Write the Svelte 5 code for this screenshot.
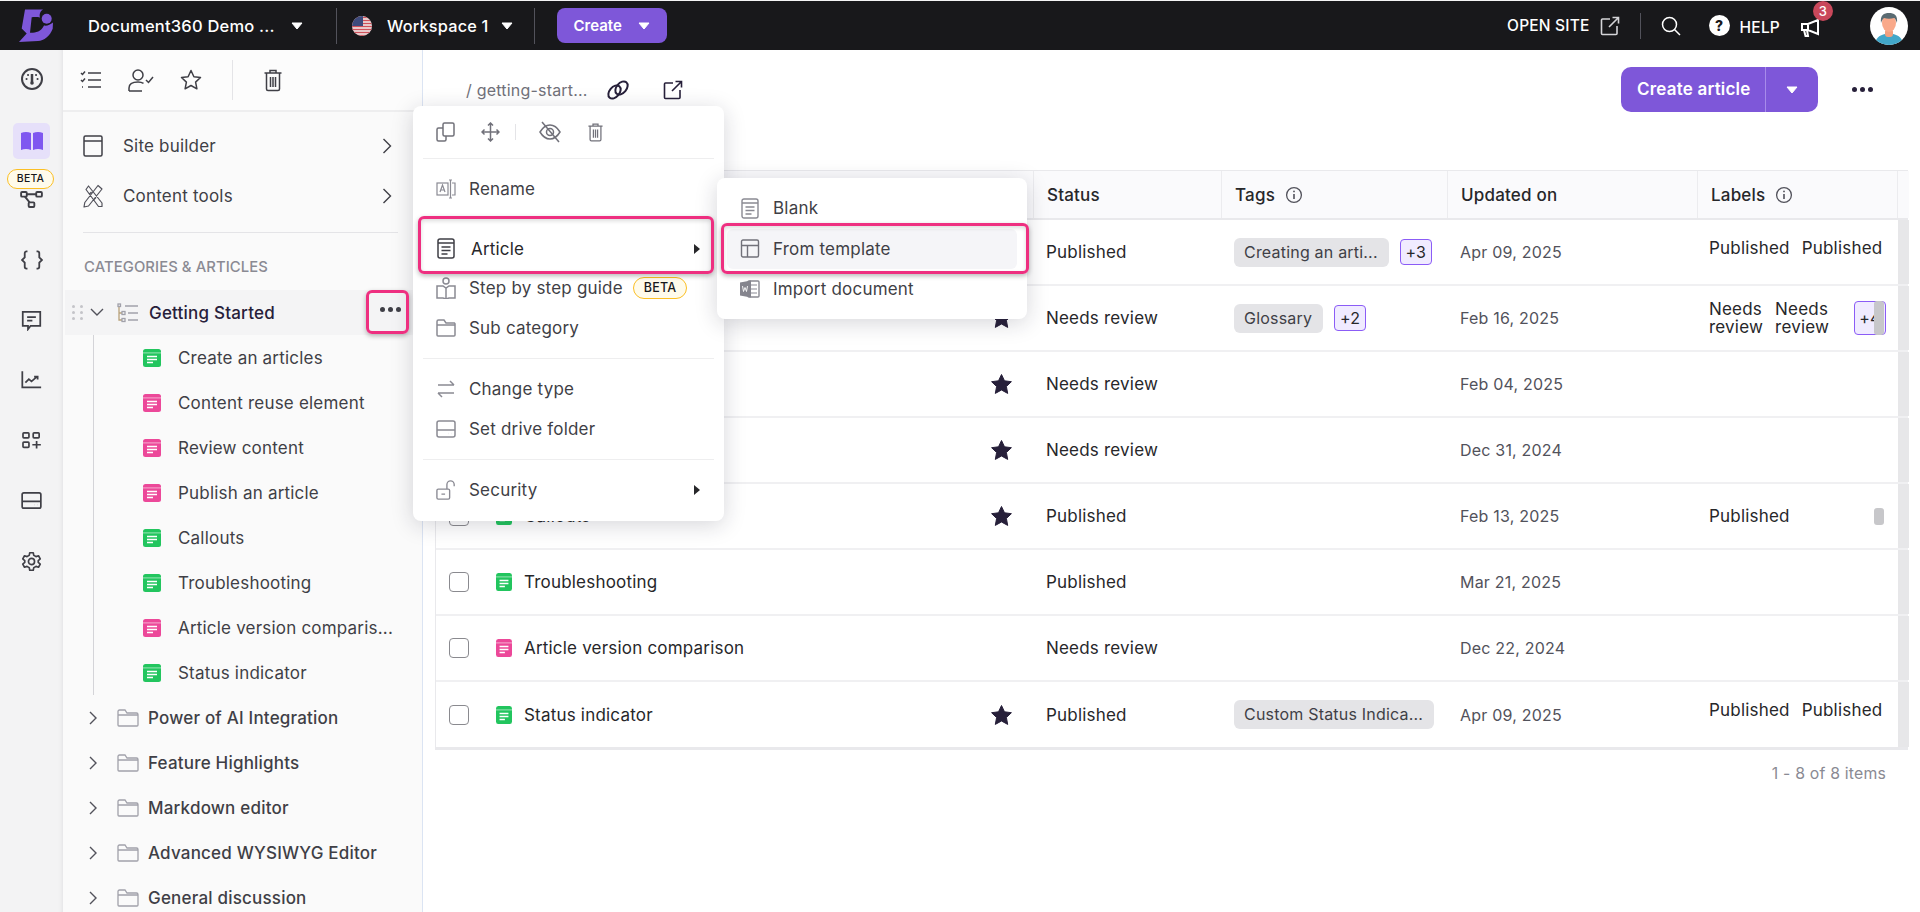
<script>
  const tree = [
    { name: 'Create an articles', color: '#22c55e' },
    { name: 'Content reuse element', color: '#ec4899' },
    { name: 'Review content', color: '#ec4899' },
    { name: 'Publish an article', color: '#ec4899' },
    { name: 'Callouts', color: '#22c55e' },
    { name: 'Troubleshooting', color: '#22c55e' },
    { name: 'Article version comparis...', color: '#ec4899' },
    { name: 'Status indicator', color: '#22c55e' }
  ];

  const folders = ['Power of AI Integration', 'Feature Highlights', 'Markdown editor', 'Advanced WYSIWYG Editor', 'General discussion'];

  const rows = [
    { name: 'Create an articles', color: '#22c55e', star: true, status: 'Published', tag: 'Creating an arti...', more: '+3', date: 'Apr 09, 2025', labels: ['Published', 'Published'] },
    { name: 'Content reuse element', color: '#ec4899', star: true, status: 'Needs review', tag: 'Glossary', more: '+2', date: 'Feb 16, 2025', labels: ['Needs review', 'Needs review'], extra: '+4' },
    { name: 'Review content', color: '#ec4899', star: true, status: 'Needs review', date: 'Feb 04, 2025', labels: [] },
    { name: 'Publish an article', color: '#ec4899', star: true, status: 'Needs review', date: 'Dec 31, 2024', labels: [] },
    { name: 'Callouts', color: '#22c55e', star: true, status: 'Published', date: 'Feb 13, 2025', labels: ['Published'], thumb: true },
    { name: 'Troubleshooting', color: '#22c55e', status: 'Published', date: 'Mar 21, 2025', labels: [] },
    { name: 'Article version comparison', color: '#ec4899', status: 'Needs review', date: 'Dec 22, 2024', labels: [] },
    { name: 'Status indicator', color: '#22c55e', star: true, status: 'Published', tag: 'Custom Status Indica...', date: 'Apr 09, 2025', labels: ['Published', 'Published'] }
  ];
</script>

{#snippet doc(color, w = 18, h = 18)}
  <svg width={w} height={h} viewBox="0 0 18 18" preserveAspectRatio="none">
    <rect x="0" y="0" width="18" height="18" rx="2.5" fill={color} />
    <rect x="0" y="3.4" width="18" height="1" fill="#fff" opacity=".55" />
    <path d="M4 7.5h10M4 10.5h10M4 13.5h6" stroke="#fff" stroke-width="1.3" />
  </svg>
{/snippet}

{#snippet caret(color = '#fff')}
  <svg class="caret" width="12" height="8" viewBox="0 0 12 8"><path d="M1 1h10L6 7z" fill={color} stroke={color} stroke-linejoin="round" /></svg>
{/snippet}

{#snippet chevron()}
  <svg width="10" height="18" viewBox="0 0 10 18" fill="none" stroke="#3f3f46" stroke-width="1.4"><path d="M1.5 2l7 7-7 7" /></svg>
{/snippet}

{#snippet info()}
  <svg width="18" height="18" viewBox="0 0 18 18" fill="none" stroke="#52525b" stroke-width="1.3"><circle cx="9" cy="9" r="7.4" /><path d="M9 8v5" stroke-width="1.6" /><circle cx="9" cy="5.4" r=".9" fill="#52525b" stroke="none" /></svg>
{/snippet}

{#snippet trash(color, w = 20, h = 24)}
  <svg width={w} height={h} viewBox="0 0 20 24" fill="none" stroke={color} stroke-width="1.5"><path d="M1.5 5h17M7 5V2.5h6V5M3.5 5v16a1.5 1.5 0 0 0 1.5 1.5h10a1.5 1.5 0 0 0 1.5-1.5V5M7.5 9v10M10 9v10M12.5 9v10" /></svg>
{/snippet}

{#snippet external(color)}
  <svg width="20" height="20" viewBox="0 0 20 20" fill="none" stroke={color} stroke-width="1.6"><path d="M10 3H2.5a1 1 0 0 0-1 1v13.5a1 1 0 0 0 1 1H16a1 1 0 0 0 1-1V10M9 11l9.5-9.5M12.5 1.5h6v6" /></svg>
{/snippet}

<div class="page">
  <header class="topbar">
    <svg class="logo" width="38" height="36" viewBox="0 0 38 36">
      <path d="M8 1.500H26C23 3 22 7 23 9.500C21 9 18 9 14.700 9.200L13 24.800C18 25 24 24 27 17.500C30 18 33 17 36 14.500L35.700 20.800C33 28 27 33 21 33L2 34L9.700 25.500L4.700 20.500Z" fill="#7e57d9" />
      <circle cx="29.700" cy="10.800" r="5" fill="#7e57d9" />
    </svg>
    <span class="brand">Document360 Demo ...</span>
    {@render caret()}
    <i class="tsep"></i>
    <svg class="flag" width="20" height="20" viewBox="0 0 20 20">
      <defs><clipPath id="flagclip"><circle cx="10" cy="10" r="10" /></clipPath></defs>
      <g clip-path="url(#flagclip)">
        <rect width="20" height="20" fill="#f1f1f1" />
        <path d="M0 1.500h20M0 4.500h20M0 7.500h20M0 10.500h20M0 13.500h20M0 16.500h20M0 19.500h20" stroke="#d0505a" stroke-width="1.500" />
        <rect width="11" height="10" fill="#3d4a7c" />
      </g>
    </svg>
    <span class="workspace">Workspace 1</span>
    {@render caret()}
    <i class="tsep second"></i>
    <button class="create">Create {@render caret()}</button>

    <div class="topright">
      <span class="opensite">OPEN SITE</span>
      {@render external('#d4d4d8')}
      <i class="tsep right"></i>
      <svg class="search" width="20" height="20" viewBox="0 0 20 20" fill="none" stroke="#fff" stroke-width="1.500"><circle cx="8.500" cy="8.500" r="7" /><path d="M13.500 13.500l5.500 5.500" /></svg>
      <span class="help-ic">?</span>
      <span class="help">HELP</span>
      <span class="mega">
        <svg width="21" height="20" viewBox="0 0 21 20" fill="none" stroke="#fff" stroke-width="2"><path d="M2 6h6l10-4v14L8 12H2zM4 12l1.500 6h2.500L7 12M8 6v6" /></svg>
        <b class="badge">3</b>
      </span>
      <svg class="avatar" width="38" height="38" viewBox="0 0 38 38">
        <defs><clipPath id="avclip"><circle cx="19" cy="19" r="19" /></clipPath></defs>
        <g clip-path="url(#avclip)">
          <rect width="38" height="38" fill="#fff" />
          <path d="M5 38c0-7 5-10 10-11h8c5 1 10 4 10 11z" fill="#42a7c9" />
          <rect x="15" y="22" width="8" height="8" rx="3" fill="#f2a07f" />
          <ellipse cx="19" cy="16" rx="7" ry="9" fill="#f9a98a" />
          <path d="M11 16c-1-8 3-10 8-10s9 2 8 10c-1-3-2-5-3-5-3 1-7 1-10 0-1 1-2 2-3 5z" fill="#5a6b72" />
        </g>
      </svg>
    </div>
  </header>

  <div class="body">
    <nav class="rail">
      <div class="slot">
        <svg width="24" height="24" viewBox="0 0 24 24" fill="none" stroke="#3f3f46" stroke-width="2"><circle cx="12" cy="12" r="10" /><path d="M12 7v8" stroke-width="2.500" /><circle cx="12" cy="16" r="1.800" fill="#3f3f46" stroke="none" /><path d="M6.500 12h.1M8 8h.1M16 8h.1M17.500 12h.1" stroke-linecap="round" /></svg>
      </div>
      <div class="slot">
        <div class="book">
          <svg width="24" height="20" viewBox="0 0 24 20"><path d="M1 2c3-1.500 7-1.500 10 0v17c-3-1.500-7-1.500-10 0zM13 2c3-1.500 7-1.500 10 0v17c-3-1.500-7-1.500-10 0z" fill="#7f57f0" /></svg>
        </div>
      </div>
      <div class="slot">
        <span class="beta rail-beta">BETA</span>
        <svg width="23" height="17" viewBox="0 0 24 18" fill="none" stroke="#3f3f46" stroke-width="2"><rect x="1" y="1" width="6" height="5" rx="1" /><rect x="17" y="1" width="6" height="5" rx="1" /><rect x="9" y="12" width="6" height="5" rx="1" /><path d="M7 3.500h10M5 6l5 6" /></svg>
      </div>
      <div class="slot">
        <svg width="22" height="20" viewBox="0 0 24 22" fill="none" stroke="#3f3f46" stroke-width="2"><path d="M7 1.500H6a2 2 0 0 0-2 2V8l-3 3 3 3v4.500a2 2 0 0 0 2 2h1M17 1.500h1a2 2 0 0 1 2 2V8l3 3-3 3v4.500a2 2 0 0 1-2 2h-1" /></svg>
      </div>
      <div class="slot">
        <svg width="21" height="21" viewBox="0 0 24 24" fill="none" stroke="#3f3f46" stroke-width="2"><path d="M2 2h20v16H11l-3 4v-4H2zM7 8h10M7 12h6" /></svg>
      </div>
      <div class="slot">
        <svg width="21" height="18" viewBox="0 0 24 20" fill="none" stroke="#3f3f46" stroke-width="2"><path d="M1.500 0v18.500H23M5 13l4-4 3 2.500 6-5M15 6h4v3.500" /></svg>
      </div>
      <div class="slot">
        <svg width="21" height="17" viewBox="0 0 24 20" fill="none" stroke="#3f3f46" stroke-width="2"><rect x="2" y="1" width="7" height="6" rx="1" /><rect x="14" y="1" width="7" height="6" rx="1" /><rect x="2" y="12" width="7" height="6" rx="1" /><path d="M13 15h10M18 10.500v9" /></svg>
      </div>
      <div class="slot">
        <svg width="21" height="17" viewBox="0 0 24 20" fill="none" stroke="#3f3f46" stroke-width="2"><rect x="1" y="1" width="22" height="18" rx="2" /><path d="M1 11h22M15 15h.1M19 15h.1" /></svg>
      </div>
      <div class="slot">
        <svg width="21" height="21" viewBox="0 0 24 24" fill="none" stroke="#3f3f46" stroke-width="1.900"><circle cx="12" cy="12" r="3.500" /><path d="M10 2h4l.6 3 2.500 1.400 2.900-1 2 3.500-2.300 2v2.200l2.300 2-2 3.500-2.900-1-2.500 1.400-.6 3h-4l-.6-3-2.500-1.400-2.900 1-2-3.500 2.300-2v-2.200l-2.300-2 2-3.500 2.900 1L9.400 5z" stroke-linejoin="round" /></svg>
      </div>
    </nav>

    <aside class="panel">
      <div class="panel-tools">
        <svg width="22" height="22" viewBox="0 0 22 22" fill="none" stroke="#3f3f46" stroke-width="1.500"><path d="M8 4h13M8 11h13M8 18h13M1 4l1.500 1.500L5 2.500M1 11l1.500 1.500L5 9.500" /><path d="M2 18h2" stroke-dasharray="1 1" /></svg>
        <svg width="26" height="24" viewBox="0 0 26 24" fill="none" stroke="#3f3f46" stroke-width="1.500"><circle cx="10" cy="7" r="5" /><path d="M1 23v-3c0-4 4-6 9-6 2 0 4 .4 5.500 1.400M1 23h13M18 12l2.500 2.500L25 9" /></svg>
        <svg width="22" height="22" viewBox="0 0 22 22" fill="none" stroke="#3f3f46" stroke-width="1.500" stroke-linejoin="round"><path d="M11 1.500l2.900 6.200 6.600.8-4.900 4.600 1.300 6.700-5.900-3.300-5.900 3.300 1.300-6.700-4.900-4.600 6.600-.8z" /></svg>
        <i class="psep"></i>
        {@render trash('#3f3f46')}
      </div>

      <div class="panel-link first">
        <svg width="20" height="22" viewBox="0 0 20 22" fill="none" stroke="#3f3f46" stroke-width="1.500"><rect x="1" y="1" width="18" height="20" rx="1.500" /><path d="M1 6h18" /></svg>
        <span>Site builder</span>
        {@render chevron()}
      </div>
      <div class="panel-link">
        <svg width="20" height="24" viewBox="0 0 20 24" fill="none" stroke="#52525b" stroke-width="1.200" stroke-linejoin="round"><path d="M3 5.500L5.500 2 19 19v3.500h-3.500zM15 1.500L19 5 5.500 22 1 23l.8-4.500zM6.500 10l2-2M11 15.500l2-2" /></svg>
        <span>Content tools</span>
        {@render chevron()}
      </div>
      <div class="panel-rule"></div>
      <div class="section-title">CATEGORIES &amp; ARTICLES</div>

      <div class="cat-row">
        <span class="grip"><i></i><i></i><i></i><i></i><i></i><i></i></span>
        <svg class="down" width="14" height="9" viewBox="0 0 14 9" fill="none" stroke="#52525b" stroke-width="1.400"><path d="M1 1l6 6 6-6" /></svg>
        <svg class="cat-ic" width="22" height="20" viewBox="0 0 22 20" fill="none" stroke="#a1a1aa" stroke-width="1.300"><path d="M2 3v14h3M2 10h3" stroke="#b9a27a" /><rect x="1" y="1" width="2.500" height="2.500" /><rect x="5" y="8.500" width="3" height="3" /><rect x="5" y="15.500" width="3" height="3" /><path d="M8 3h13M11 10h10M11 17h10" stroke-width="1.700" /></svg>
        <span>Getting Started</span>
      </div>
      <ul class="tree">
        {#each tree as item}
          <li>{@render doc(item.color)}<span>{item.name}</span></li>
        {/each}
      </ul>
      <ul class="folders">
        {#each folders as name}
          <li>
            <svg width="9" height="14" viewBox="0 0 9 14" fill="none" stroke="#52525b" stroke-width="1.400"><path d="M1 1l6 6-6 6" /></svg>
            <svg width="22" height="18" viewBox="0 0 22 18" fill="none" stroke="#a1a1aa" stroke-width="1.300"><path d="M1 16V2.500A1.500 1.500 0 0 1 2.500 1H8l2 3h9.500A1.500 1.500 0 0 1 21 5.500V16a1 1 0 0 1-1 1H2a1 1 0 0 1-1-1zM1 6h20" /></svg>
            <span>{name}</span>
          </li>
        {/each}
      </ul>
    </aside>

    <main class="main">
      <div class="main-head">
        <span class="slug">/ getting-start...</span>
        <svg class="link-ic" width="24" height="22" viewBox="0 0 24 22" fill="none" stroke="#27203a" stroke-width="2"><ellipse cx="8.500" cy="13" rx="5" ry="7.500" transform="rotate(40 8.500 13)" /><ellipse cx="15.500" cy="9" rx="5" ry="7.500" transform="rotate(40 15.500 9)" /></svg>
        {@render external('#27203a')}
        <div class="head-actions">
          <div class="create-article">
            <span class="ca-label">Create article</span>
            <span class="ca-drop">{@render caret()}</span>
          </div>
          <span class="more-dots"><i></i><i></i><i></i></span>
        </div>
      </div>

      <div class="table">
        <div class="t-row t-head">
          <div class="c-name"></div>
          <div class="c-status">Status</div>
          <div class="c-tags">Tags {@render info()}</div>
          <div class="c-date">Updated on</div>
          <div class="c-labels">Labels {@render info()}</div>
          <div class="c-end"></div>
        </div>
        {#each rows as row}
          <div class="t-row">
            <div class="c-name">
              <span class="check"></span>
              {@render doc(row.color, 16, 18)}
              <span class="row-name">{row.name}</span>
              {#if row.star}
                <svg class="star" width="21" height="20" viewBox="0 0 21 20"><path d="M10.500.500l3 6.300 6.900.9-5 4.800 1.300 6.900-6.200-3.400-6.200 3.400 1.300-6.900-5-4.800 6.900-.9z" fill="#27203a" stroke="#27203a" stroke-linejoin="round" /></svg>
              {/if}
            </div>
            <div class="c-status">{row.status}</div>
            <div class="c-tags">
              {#if row.tag}<span class="tag">{row.tag}</span>{/if}
              {#if row.more}<span class="more">{row.more}</span>{/if}
            </div>
            <div class="c-date cell-date">{row.date}</div>
            <div class="c-labels cell-labels" class:raised={row.labels.length === 2 && !row.extra}>
              {#each row.labels as label}<span class="label">{label}</span>{/each}
              {#if row.extra}<span class="more clipped">{row.extra}</span>{/if}
              {#if row.extra || row.thumb}<span class="thumb" class:tall={row.extra}></span>{/if}
            </div>
            <div class="c-end"></div>
          </div>
        {/each}
      </div>
      <div class="pager">1 - 8 of 8 items</div>
    </main>
  </div>

  <div class="menu">
    <div class="menu-tools">
      <svg width="19" height="20" viewBox="0 0 19 20" fill="none" stroke="#71717a" stroke-width="1.500"><rect x="7" y="1" width="11" height="13" rx="1.500" /><path d="M7 6H2.500A1.500 1.500 0 0 0 1 7.500v10A1.500 1.500 0 0 0 2.500 19h6a1.500 1.500 0 0 0 1.500-1.500V14" /></svg>
      <svg width="19" height="20" viewBox="0 0 19 20" fill="none" stroke="#71717a" stroke-width="1.500"><path d="M9.500 1v18M1 10h17M7 3.500L9.500 1 12 3.500M7 16.500L9.500 19l2.500-2.500M3.500 7.500L1 10l2.500 2.500M15.500 7.500L18 10l-2.500 2.500" /></svg>
      <i class="msep"></i>
      <svg width="22" height="22" viewBox="0 0 22 22" fill="none" stroke="#71717a" stroke-width="1.500"><path d="M1 11c3-5 6-7 10-7s7 2 10 7c-3 5-6 7-10 7s-7-2-10-7z" /><circle cx="11" cy="11" r="3.500" /><path d="M3 1l17 20" /></svg>
      {@render trash('#71717a', 17, 20)}
    </div>
    <div class="m-rule"></div>
    <div class="m-item"><svg width="20" height="20" viewBox="0 0 20 20" fill="none" stroke="#8a8a93" stroke-width="1.200"><rect x="1" y="4" width="11" height="12" /><path d="M4 13l2.500-7L9 13M5 11h3M13 1h3M13 19h3M14.500 1v18M16 4h3v12h-3" /></svg><span>Rename</span></div>
    <div class="m-item article">
      <svg width="18" height="21" viewBox="0 0 18 21" fill="none" stroke="#3f3f46" stroke-width="1.500"><rect x="1" y="1" width="16" height="19" rx="2" /><path d="M1 5h16M4.500 9h9M4.500 12.500h9M4.500 16h6" /></svg>
      <span>Article</span>
      <b class="arrow"></b>
    </div>
    <div class="m-item step"><svg width="20" height="22" viewBox="0 0 20 22" fill="none" stroke="#8a8a93" stroke-width="1.500"><circle cx="10" cy="4" r="3" /><path d="M1 9h6l3 2 3-2h6v12h-6l-3 1-3-1H1zM10 11v11" /></svg><span>Step by step guide</span><span class="beta">BETA</span></div>
    <div class="m-item"><svg width="20" height="18" viewBox="0 0 20 18" fill="none" stroke="#8a8a93" stroke-width="1.500"><path d="M1 16V2.500A1.500 1.500 0 0 1 2.500 1H8l2 3h8.500A1.500 1.500 0 0 1 19 5.500V16a1 1 0 0 1-1 1H2a1 1 0 0 1-1-1zM1 6h18" /></svg><span>Sub category</span></div>
    <div class="m-rule"></div>
    <div class="m-item"><svg width="20" height="20" viewBox="0 0 20 20" fill="none" stroke="#8a8a93" stroke-width="1.500"><path d="M2 6h16M14 2l4 4M18 14H2M6 18l-4-4" /></svg><span>Change type</span></div>
    <div class="m-item"><svg width="20" height="18" viewBox="0 0 20 18" fill="none" stroke="#8a8a93" stroke-width="1.500"><rect x="1" y="1" width="18" height="16" rx="2" /><path d="M1 10h18M12 13.500h.1M15.500 13.500h.1" /></svg><span>Set drive folder</span></div>
    <div class="m-rule"></div>
    <div class="m-item"><svg width="22" height="22" viewBox="0 0 22 22" fill="none" stroke="#8a8a93" stroke-width="1.500"><rect x="1" y="10" width="14" height="11" rx="1.500" /><path d="M12 10V5a4 4 0 0 1 8 0v2M6 15.500h4" /></svg><span>Security</span><b class="arrow"></b></div>
  </div>

  <div class="submenu">
    <div class="s-item"><svg width="18" height="21" viewBox="0 0 18 21" fill="none" stroke="#8a8a93" stroke-width="1.400"><rect x="1" y="1" width="16" height="19" rx="2" /><path d="M1 5h16M4.500 9h9M4.500 12.500h9M4.500 16h6" /></svg><span>Blank</span></div>
    <div class="s-item current"><svg width="19" height="19" viewBox="0 0 19 19" fill="none" stroke="#71717a" stroke-width="1.400"><rect x="1" y="1" width="17" height="17" rx="1.500" /><path d="M1 6.500h17M7 6.500V18" /></svg><span>From template</span></div>
    <div class="s-item"><svg width="20" height="20" viewBox="0 0 20 20"><rect x="8" y="2" width="11" height="16" rx="1" fill="none" stroke="#8a8a93" stroke-width="1.400" /><path d="M11 6h6M11 10h6M11 14h6" stroke="#8a8a93" stroke-width="1.200" /><path d="M0 3.500l11-2v17l-11-2z" fill="#85858e" /><path d="M2.500 7l1 5.500 1.500-4 1.500 4 1-5.500" stroke="#fff" fill="none" stroke-width=".9" /></svg><span>Import document</span></div>
  </div>

  <!-- callout frames from the annotated screenshot -->
  <div class="callout c-dots"></div>
  <span class="dots-over"><i></i><i></i><i></i></span>
  <div class="callout c-article"></div>
  <div class="callout c-template"></div>
</div>

<style>
  :global(body) {
    margin: 0;
    background: #fff;
  }

  .page {
    position: relative;
    width: 1920px;
    height: 912px;
    overflow: hidden;
    font-family: Inter, "Liberation Sans", sans-serif;
    font-size: 17px;
    color: #27272a;
    letter-spacing: .2px;
  }

  /* top bar */
  .topbar {
    display: flex;
    align-items: center;
    height: 49px;
    border-top: 1px solid #f4f4f5;
    background: #18181b;
    color: #fff;
    padding-left: 17px;
    box-sizing: content-box;
  }
  .logo { margin-right: 33px; }
  .brand { font-weight: 500; font-size: 16.5px; width: 203px; white-space: nowrap; }
  .caret { flex: none; }
  .tsep {
    width: 1px;
    height: 36px;
    background: #52525b;
    margin: 0 15px 0 33px;
  }
  .tsep.second { margin: 0 22px 0 21px; }
  .tsep.right { margin: 0 20px; height: 26px; }
  .workspace { margin: 0 12px 0 15px; font-weight: 500; font-size: 16.3px; white-space: nowrap; }
  .create {
    display: flex;
    align-items: center;
    gap: 16px;
    width: 110px;
    height: 35px;
    padding: 0 0 0 17px;
    border: 0;
    border-radius: 8px;
    background: #7e57d9;
    color: #fff;
    font: 600 15px Inter, sans-serif;
  }
  .topright {
    margin-left: auto;
    display: flex;
    align-items: center;
    padding-right: 12px;
  }
  .opensite { font-weight: 500; font-size: 15.5px; margin-right: 10px; white-space: nowrap; }
  .search { margin-right: 28px; }
  .help-ic {
    width: 21px;
    height: 21px;
    border-radius: 50%;
    background: #fff;
    color: #18181b;
    font: 800 14px/21px Inter, sans-serif;
    text-align: center;
    margin-right: 10px;
  }
  .help { font-weight: 500; font-size: 15.5px; margin-right: 20px; padding-top: 3px; }
  .mega { position: relative; display: flex; margin-right: 50px; padding-top: 4px; }
  .badge {
    position: absolute;
    left: 13px;
    top: -13px;
    width: 20px;
    height: 20px;
    border-radius: 50%;
    background: #c9485b;
    font: 500 13px/20px Inter, sans-serif;
    text-align: center;
  }
  .avatar { margin-left: -1px; }

  .body {
    display: flex;
    height: 862px;
  }

  /* icon rail */
  .rail {
    width: 63px;
    flex: none;
    display: grid;
    grid-auto-rows: 60.25px;
    align-content: start;
    background: #f3f3f4;
    box-shadow: inset -5px 0 5px -5px #d9d9dc;
    box-sizing: border-box;
  }
  .slot {
    position: relative;
    display: flex;
    align-items: center;
    justify-content: center;
    transform: translateY(-1px);
  }
  .book {
    display: flex;
    align-items: center;
    justify-content: center;
    width: 37px;
    height: 36px;
    margin-top: 3px;
    border-radius: 5px;
    background: #e6e0fa;
  }
  .beta {
    display: inline-block;
    border: 1px solid #fbbf24;
    border-radius: 11px;
    background: #fffbeb;
    color: #18181b;
    font-size: 12.5px;
    font-weight: 500;
    line-height: 20px;
    padding: 0 10px;
  }
  .rail-beta {
    position: absolute;
    left: 7px;
    top: -1px;
    width: 47px;
    box-sizing: border-box;
    font-size: 10.5px;
    line-height: 18px;
    text-align: center;
    padding: 0;
  }

  /* tree panel */
  .panel {
    width: 359px;
    flex: none;
    background: #fafafa;
    border-right: 1px solid #dbe4f3;
    box-sizing: content-box;
    overflow: hidden;
  }
  .panel-tools {
    display: flex;
    align-items: center;
    gap: 26px;
    height: 60px;
    padding-left: 17px;
    border-bottom: 2px solid #eeeeef;
    background: #fcfcfc;
  }
  .psep { width: 1px; height: 40px; background: #e4e4e7; margin: 0 4px; }
  .panel-link {
    display: flex;
    align-items: center;
    height: 50px;
    padding-left: 20px;
    color: #3f3f46;
  }
  .panel-link.first { margin-top: 9px; }
  .panel-link svg:first-child { width: 20px; flex: none; }
  .panel-link span { margin-left: 20px; flex: 1; }
  .panel-link svg:last-child { margin-right: 30px; }
  .panel-rule { height: 1px; margin: 11px 24px 0 20px; background: #e4e4e7; }
  .section-title {
    margin: 26px 0 0 21px;
    height: 31px;
    font-size: 14.8px;
    font-weight: 500;
    color: #8a8a93;
    line-height: 16px;
    letter-spacing: .1px;
  }
  .cat-row {
    display: flex;
    align-items: center;
    height: 45px;
    margin-left: 2px;
    background: #f4f4f5;
    font-weight: 500;
    color: #27203a;
  }
  .grip {
    display: grid;
    grid-template-columns: 3px 3px;
    gap: 3px 5px;
    margin: 0 7px;
  }
  .grip i { width: 3px; height: 3px; border-radius: 50%; background: #c4c4c9; }
  .down { margin-right: 13px; }
  .cat-ic { margin-right: 10px; }

  .tree {
    list-style: none;
    margin: 0 0 0 30px;
    padding: 0;
    border-left: 1px solid #d4d4d8;
  }
  .tree li {
    display: flex;
    align-items: center;
    height: 45px;
    padding-left: 49px;
    color: #3f3f46;
    white-space: nowrap;
  }
  .tree li span { margin-left: 17px; }
  .folders { list-style: none; margin: 0; padding: 0; }
  .folders li {
    display: flex;
    align-items: center;
    height: 45px;
    padding-left: 26px;
    font-weight: 500;
    color: #3f3f46;
    white-space: nowrap;
  }
  .folders li span { margin-left: 9px; }
  .folders li svg:first-child { margin-right: 19px; }

  /* main area */
  .main {
    flex: 1;
    min-width: 0;
    padding: 17px 12px 0;
    box-sizing: border-box;
  }
  .main-head {
    display: flex;
    align-items: center;
    height: 45px;
    padding-left: 31px;
  }
  .slug { color: #71717a; font-size: 16px; width: 140px; white-space: nowrap; }
  .link-ic { margin-right: 33px; }
  .head-actions { margin-left: auto; display: flex; align-items: center; margin-right: 35px; }
  .create-article {
    display: flex;
    align-items: stretch;
    width: 197px;
    height: 45px;
    border-radius: 10px;
    background: #7e57d9;
    color: #fff;
    font-weight: 600;
    line-height: 45px;
  }
  .ca-label { width: 145px; padding-left: 16px; box-sizing: border-box; border-right: 1px solid #a78bea; white-space: nowrap; }
  .ca-drop { flex: 1; display: flex; align-items: center; justify-content: center; }
  .more-dots { display: flex; gap: 3px; margin-left: 34px; }
  .more-dots i, .dots-over i { width: 5px; height: 5px; border-radius: 50%; background: #27203a; }

  .table {
    margin-top: 58px;
    border: 1px solid #e9e9ec;
    border-width: 1px 0 3px 1px;
  }
  .t-row {
    display: grid;
    grid-template-columns: 598px 188px 226px 250px 200px 11px;
    height: 66px;
    border-bottom: 2px solid #f0f0f2;
    box-sizing: border-box;
    align-items: stretch;
  }
  .t-row:last-child { border-bottom: 0; height: 65px; }
  .t-row > div {
    display: flex;
    align-items: center;
    padding-left: 12px;
    min-width: 0;
  }
  .t-head {
    height: 49px;
    background: #fafafc;
    border-bottom-color: #e9e9ec;
    font-weight: 500;
    color: #27272a;
  }
  .t-head > div { border-right: 1px solid #ececef; gap: 10px; box-sizing: border-box; padding-left: 13px; }
  .t-row .c-end { background: #e7e7e9; padding: 0; }
  .t-head .c-end { background: #fafafc; border: 0; }

  .c-name { position: relative; }
  .check {
    flex: none;
    width: 20px;
    height: 20px;
    box-sizing: border-box;
    border: 1.5px solid #8a8a8f;
    border-radius: 4px;
    margin: 0 27px 0 1px;
  }
  .row-name { margin-left: 12px; flex: 1; white-space: nowrap; }
  .star { margin-right: 22px; }
  .t-row .cell-date { color: #52525b; font-size: 16px; }
  .c-tags { gap: 11px; }
  .tag {
    display: block;
    box-sizing: border-box;
    height: 29px;
    line-height: 29px;
    border-radius: 6px;
    background: #e4e4e7;
    color: #3f3f46;
    padding: 0 11px 0 10px;
    font-size: 16px;
    white-space: nowrap;
  }
  .more {
    flex: none;
    box-sizing: border-box;
    min-width: 32px;
    height: 26px;
    line-height: 24px;
    text-align: center;
    border: 1px solid #8b5cf6;
    border-radius: 4px;
    background: #f0ebff;
    color: #27272a;
    font-size: 16px;
  }
  .t-row .cell-labels {
    position: relative;
    overflow: hidden;
    padding-left: 11px;
    gap: 12px;
    line-height: 18px;
  }
  .t-row .cell-labels.raised { padding-bottom: 9px; }
  .label { width: min-content; }
  .more.clipped {
    height: 34px;
    line-height: 32px;
    width: 32px;
    margin: 0 12px 0 auto;
  }
  .thumb {
    position: absolute;
    right: 14px;
    top: 24px;
    width: 10px;
    height: 17px;
    border-radius: 3px;
    background: #c7c7ca;
  }
  .thumb.tall { top: 15px; height: 34px; }

  .pager {
    margin-top: 14px;
    padding-right: 22px;
    text-align: right;
    color: #8a8a93;
    font-size: 15.8px;
  }

  /* context menus */
  .menu, .submenu {
    position: absolute;
    background: #fff;
    border-radius: 8px;
    box-shadow: 0 4px 22px rgba(30, 30, 50, .18);
  }
  .menu { left: 413px; top: 106px; width: 311px; height: 415px; z-index: 2; box-sizing: border-box; padding: 0 10px; }
  .menu-tools {
    display: flex;
    align-items: center;
    height: 52px;
    padding-left: 13px;
    gap: 26px;
  }
  .msep { width: 1px; height: 16px; background: #e4e4e7; margin: 0 -3px 0 -11px; }
  .m-rule { height: 1px; background: #eeeeef; }
  .m-item {
    display: flex;
    align-items: center;
    height: 40.5px;
    padding-left: 13px;
    position: relative;
    color: #3f3f46;
  }
  .m-item svg { flex: none; width: 20px; }
  .m-item span:first-of-type { margin-left: 13px; }
  .m-rule + .m-item { margin-top: 10px; }
  .m-item + .m-rule { margin-top: 9px; }
  .m-item.article { margin-top: 19px; height: 40px; }
  .m-item.article span { margin-left: 15px; color: #27272a; }
  .m-item.step { margin-top: -1px; }
  .m-item .beta { margin-left: 10px; }
  .arrow {
    position: absolute;
    right: 14px;
    top: 50%;
    margin-top: -5px;
    border-style: solid;
    border-width: 5px 0 5px 6px;
    border-color: transparent transparent transparent #27272a;
  }
  .submenu { left: 717px; top: 178px; width: 310px; height: 141px; z-index: 3; box-sizing: border-box; padding: 10px 10px 0; }
  .s-item {
    display: flex;
    align-items: center;
    height: 40.5px;
    padding-left: 13px;
    color: #3f3f46;
  }
  .s-item span { margin-left: 13px; }
  .s-item svg { width: 20px; flex: none; }
  .s-item.current { background: #f5f5f8; border-radius: 6px; }

  .callout {
    position: absolute;
    box-sizing: border-box;
    border: 3px solid #ee2f80;
    border-radius: 6px;
    z-index: 4;
    box-shadow: 0 2px 5px rgba(0, 0, 0, .28);
  }
  .c-dots { left: 366px; top: 290px; width: 43px; height: 44px; }
  .c-article { left: 418px; top: 216px; width: 296px; height: 58px; box-shadow: 0 2px 5px rgba(0, 0, 0, .28), inset 0 2px 4px rgba(0, 0, 0, .14); }
  .c-template { left: 721px; top: 223px; width: 308px; height: 51px; box-shadow: 0 2px 5px rgba(0, 0, 0, .28), inset 0 2px 4px rgba(0, 0, 0, .14); }
  .dots-over { position: absolute; left: 380px; top: 307px; display: flex; gap: 3px; z-index: 5; }
  .dots-over i { background: #3f3f46; }
</style>
